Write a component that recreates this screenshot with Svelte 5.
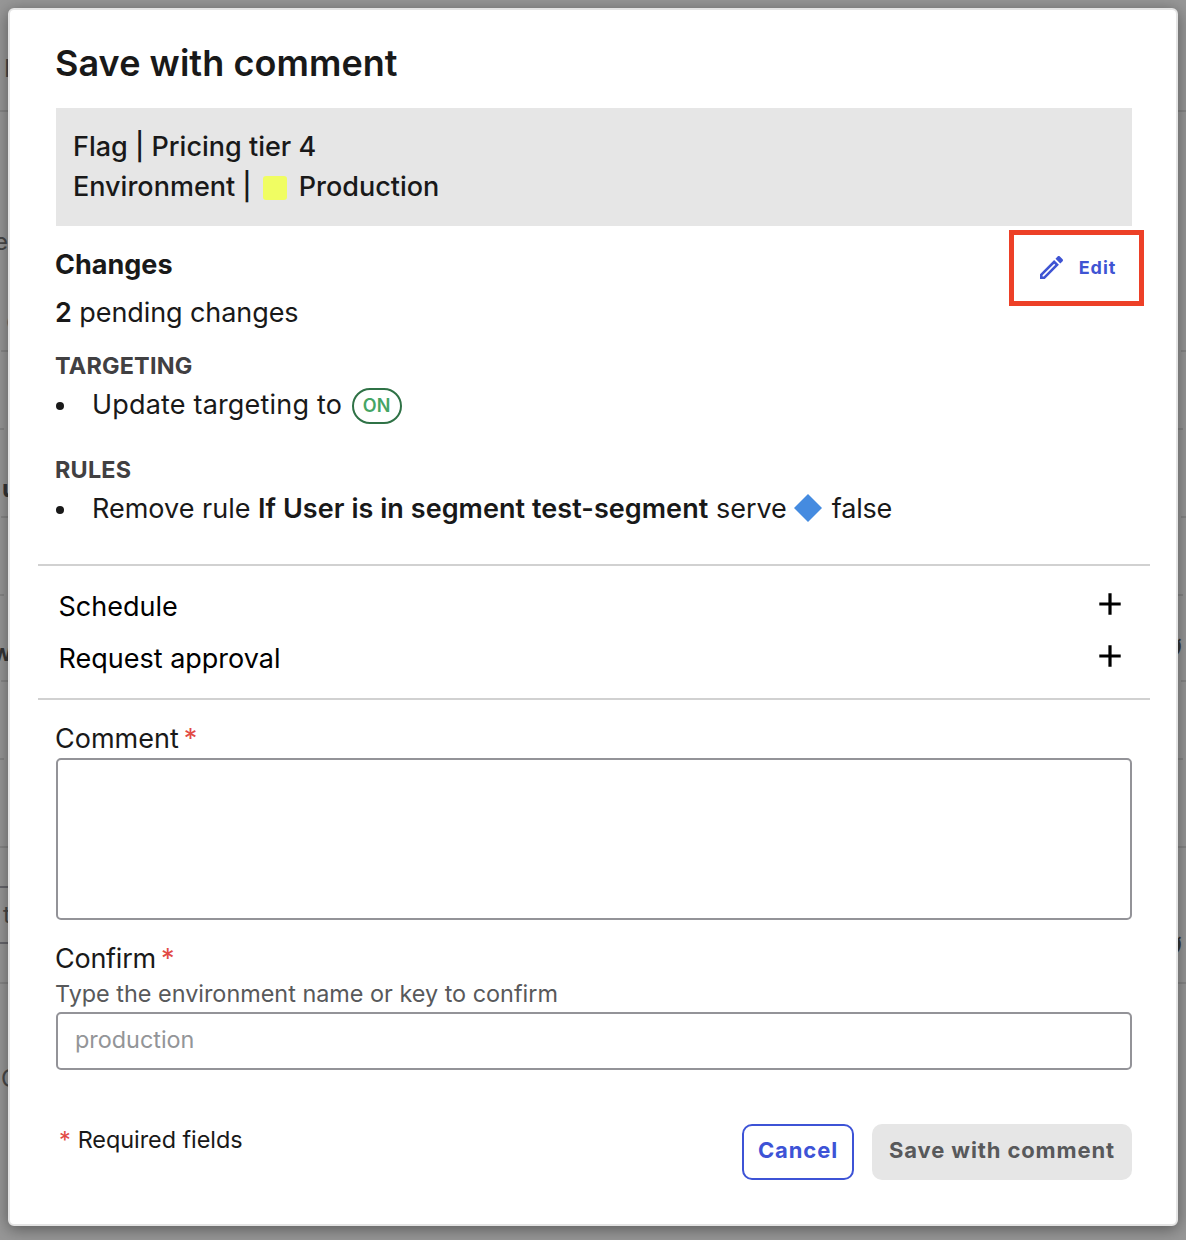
<script>
  // Pieces of the page that peek out on both sides of the dialog.
  const rules = [
    { y: 110, x: 0, w: 1186 },
    { y: 350, x: 1, w: 7 },
    { y: 350, x: 1181, w: 5 },
    { y: 428, x: 0, w: 4 },
    { y: 428, x: 1178, w: 5 },
    { y: 516, x: 1, w: 7 },
    { y: 516, x: 1181, w: 5 },
    { y: 594, x: 0, w: 4 },
    { y: 594, x: 1178, w: 5 },
    { y: 680, x: 1, w: 7 },
    { y: 680, x: 1181, w: 5 },
    { y: 758, x: 0, w: 4 },
    { y: 758, x: 1178, w: 5 },
    { y: 846, x: 0, w: 1186 },
    { y: 886, x: 0, w: 8, dark: true },
    { y: 942, x: 0, w: 8, dark: true },
    { y: 982, x: 0, w: 1186 }
  ];
  const glyphs = [
    { t: 'I', x: 4, y: 54 },
    { t: 'e', x: -6, y: 227 },
    { t: 'o', x: 6, y: 306, soft: true },
    { t: 'u', x: 2, y: 474, bold: true },
    { t: 'w', x: -8, y: 638, bold: true },
    { t: 't', x: 3, y: 900 },
    { t: 'C', x: 1, y: 1064 },
    { t: 'Ø', x: 1163, y: 634, italic: true },
    { t: 'Ø', x: 1163, y: 932, italic: true }
  ];

  let comment = $state('');
  let confirmation = $state('');
</script>

<div class="page">
  <div class="backdrop" aria-hidden="true">
    {#each rules as r}
      <i class="line" class:dark={r.dark} style="left:{r.x}px;top:{r.y}px;width:{r.w}px"></i>
    {/each}
    {#each glyphs as g}
      <span class="glyph" class:bold={g.bold} class:soft={g.soft} class:italic={g.italic} style="left:{g.x}px;top:{g.y}px">{g.t}</span>
    {/each}
  </div>

  <div class="modal" role="dialog" aria-labelledby="title">
    <h1 id="title">Save with comment</h1>

    <div class="context">
      <div>Flag | Pricing tier 4</div>
      <div class="env"><span>Environment |</span><i class="swatch"></i><span>Production</span></div>
    </div>

    <section class="changes">
      <div class="changes-head">
        <h2>Changes</h2>
        <button class="edit" type="button">
          <svg viewBox="3 3 18 18" width="23" height="23" fill="currentColor">
            <path d="M14.06 9.02l.92.92L5.92 19H5v-.92l9.06-9.06M17.66 3c-.25 0-.51.1-.7.29l-1.83 1.83 3.75 3.75 1.83-1.83c.39-.39.39-1.02 0-1.41l-2.34-2.34c-.2-.2-.45-.29-.71-.29zm-3.6 3.19L3 17.25V21h3.75L17.81 9.94l-3.75-3.75z" />
          </svg>
          <span>Edit</span>
        </button>
      </div>
      <p class="pending"><b>2</b> pending changes</p>

      <h3>TARGETING</h3>
      <div class="item"><i class="dot"></i><span class="update">Update targeting to</span><span class="pill">ON</span></div>

      <h3 class="second">RULES</h3>
      <div class="item">
        <i class="dot"></i><span class="text">Remove rule <b>If User is in segment test-segment</b> serve</span>
        <svg class="diamond" viewBox="0 0 28 28" width="28" height="28"><path d="M14 0L28 14L14 28L0 14Z" fill="#458be0" /></svg>
        <span class="text value">false</span>
      </div>
    </section>

    <section class="options">
      {#each ['Schedule', 'Request approval'] as label}
        <button class="option" type="button">
          <span class="text">{label}</span>
          <svg viewBox="0 0 22 22" width="22" height="22"><path d="M11 0.3V21.7M0.3 11H21.7" stroke="#000" stroke-width="3.2" /></svg>
        </button>
      {/each}
    </section>

    <label class="field" for="comment"><span>Comment</span><span class="star">*</span></label>
    <textarea id="comment" bind:value={comment}></textarea>

    <label class="field confirm" for="confirm"><span>Confirm</span><span class="star">*</span></label>
    <p class="hint">Type the environment name or key to confirm</p>
    <input id="confirm" placeholder="production" bind:value={confirmation} />

    <footer>
      <p class="required"><span class="star">*</span><span>Required fields</span></p>
      <button class="btn cancel" type="button">Cancel</button>
      <button class="btn save" type="button">Save with comment</button>
    </footer>
  </div>
</div>

<style>
  :global(body) { margin: 0; }
  .page {
    position: relative;
    box-sizing: border-box;
    width: 1186px;
    height: 1240px;
    padding: 8px;
    overflow: hidden;
    background: #979797;
    font-family: Inter, "Liberation Sans", sans-serif;
    color: #191919;
  }
  .page * { box-sizing: border-box; }
  h1, h2, h3, p { margin: 0; }
  button, input, textarea { font-family: inherit; }

  .backdrop { position: absolute; inset: 0; }
  .line { position: absolute; height: 2px; background: #868686; }
  .line.dark { background: #66666c; }
  .glyph { position: absolute; font-size: 24px; line-height: 30px; color: #484848; }
  .glyph.bold { font-weight: 700; color: #353535; }
  .glyph.soft { color: #6e6e6e; }
  .glyph.italic { font-style: italic; font-weight: 600; color: #353535; }

  .modal {
    position: relative;
    width: 1170px;
    height: 1218px;
    padding: 31px 44px 0 46px;
    border: 2px solid #e4e4e4;
    border-radius: 6px;
    background: #fff;
    box-shadow: 0 3px 16px rgba(0, 0, 0, 0.42);
    font-size: 27px;
    line-height: 40px;
  }

  h1 { margin-left: -1px; font-size: 36px; font-weight: 600; line-height: 44px; letter-spacing: 0.06px; }

  .context {
    height: 118px;
    margin-top: 23px;
    padding: 19px 17px;
    background: #e6e6e6;
    font-weight: 500;
  }
  .env { display: flex; align-items: center; }
  .swatch { width: 24px; height: 24px; margin: 2px 12px 0 11px; border-radius: 3px; background: #f0fd62; }

  .changes { margin: 18px 0 0 -1px; }
  .changes-head { display: flex; justify-content: space-between; height: 48px; }
  h2 { padding-top: 1px; font-size: 27px; font-weight: 700; line-height: 40px; }
  .edit {
    display: flex;
    align-items: center;
    justify-content: center;
    gap: 16px;
    width: 135px;
    height: 76px;
    margin: -14px -12px 0 0;
    padding: 0 0 1px 3px;
    border: 5px solid #ed4027;
    background: none;
    color: #3f54d3;
    font-size: 18px;
    font-weight: 700;
    letter-spacing: 0.95px;
  }
  b { font-weight: 600; }
  .pending { padding-top: 1px; letter-spacing: -0.08px; }
  h3 { height: 29px; margin-top: 18px; font-size: 23.4px; font-weight: 700; line-height: 29px; letter-spacing: 0.2px; color: #414042; }
  h3.second { margin-top: 31px; }
  .item { display: flex; align-items: center; height: 40px; margin-top: 4px; white-space: pre; }
  .item b { letter-spacing: 0.05px; }
  .dot { width: 8px; height: 8px; margin: 4px 28px 0 1px; border-radius: 50%; background: #191919; }
  .text, .update { padding-top: 2px; }
  .value { letter-spacing: -0.2px; }
  .update { letter-spacing: 0.18px; }
  .pill {
    width: 50px;
    height: 36px;
    margin: 4px 0 0 9.6px;
    border: 2px solid #2f7246;
    border-radius: 18px;
    color: #45a564;
    font-size: 18px;
    font-weight: 600;
    line-height: 32px;
    text-align: center;
  }
  .diamond { margin: 0 10px 0 7px; }

  .options {
    height: 136px;
    margin: 36px -18px 0 -18px;
    padding: 20px 28px 0 20.5px;
    border-top: 2px solid #d1d1d1;
    border-bottom: 2px solid #d1d1d1;
  }
  .option {
    display: flex;
    align-items: center;
    justify-content: space-between;
    width: 100%;
    height: 40px;
    padding: 0;
    border: 0;
    background: none;
    color: #000;
    font-size: 27px;
    line-height: 40px;
  }
  .option + .option { margin-top: 12px; }
  .option svg { margin: -4px 1px 0 0; }

  .field { display: flex; gap: 5px; height: 40px; margin: 18px 0 0 -1px; padding-top: 1px; }
  .confirm { letter-spacing: -0.25px; }
  .star { color: #e24a45; }
  textarea, input {
    display: block;
    width: 1076px;
    border: 2px solid #939398;
    border-radius: 5px;
    background: #fff;
    font-size: 23.4px;
    outline: 0;
  }
  textarea { height: 162px; padding: 14px 16px; resize: none; }
  .hint { height: 34px; margin-left: -1px; font-size: 23.4px; line-height: 31px; color: #58595b; }
  input { height: 58px; padding: 0 17px 3px; }
  input::placeholder { color: #939598; opacity: 1; }

  footer { display: flex; margin-top: 54px; }
  .required { display: flex; gap: 7px; margin: 0 auto 0 3px; font-size: 23.4px; line-height: 31px; letter-spacing: -0.04px; }
  .btn { height: 56px; padding: 0 0 5px; border: 0; border-radius: 10px; font-size: 22px; font-weight: 700; letter-spacing: 0.88px; }
  .cancel { width: 112px; border: 2px solid #3d53d6; background: #fff; color: #3d53d6; }
  .save { width: 260px; margin-left: 18px; background: #e6e6e6; color: #58595b; }
</style>
